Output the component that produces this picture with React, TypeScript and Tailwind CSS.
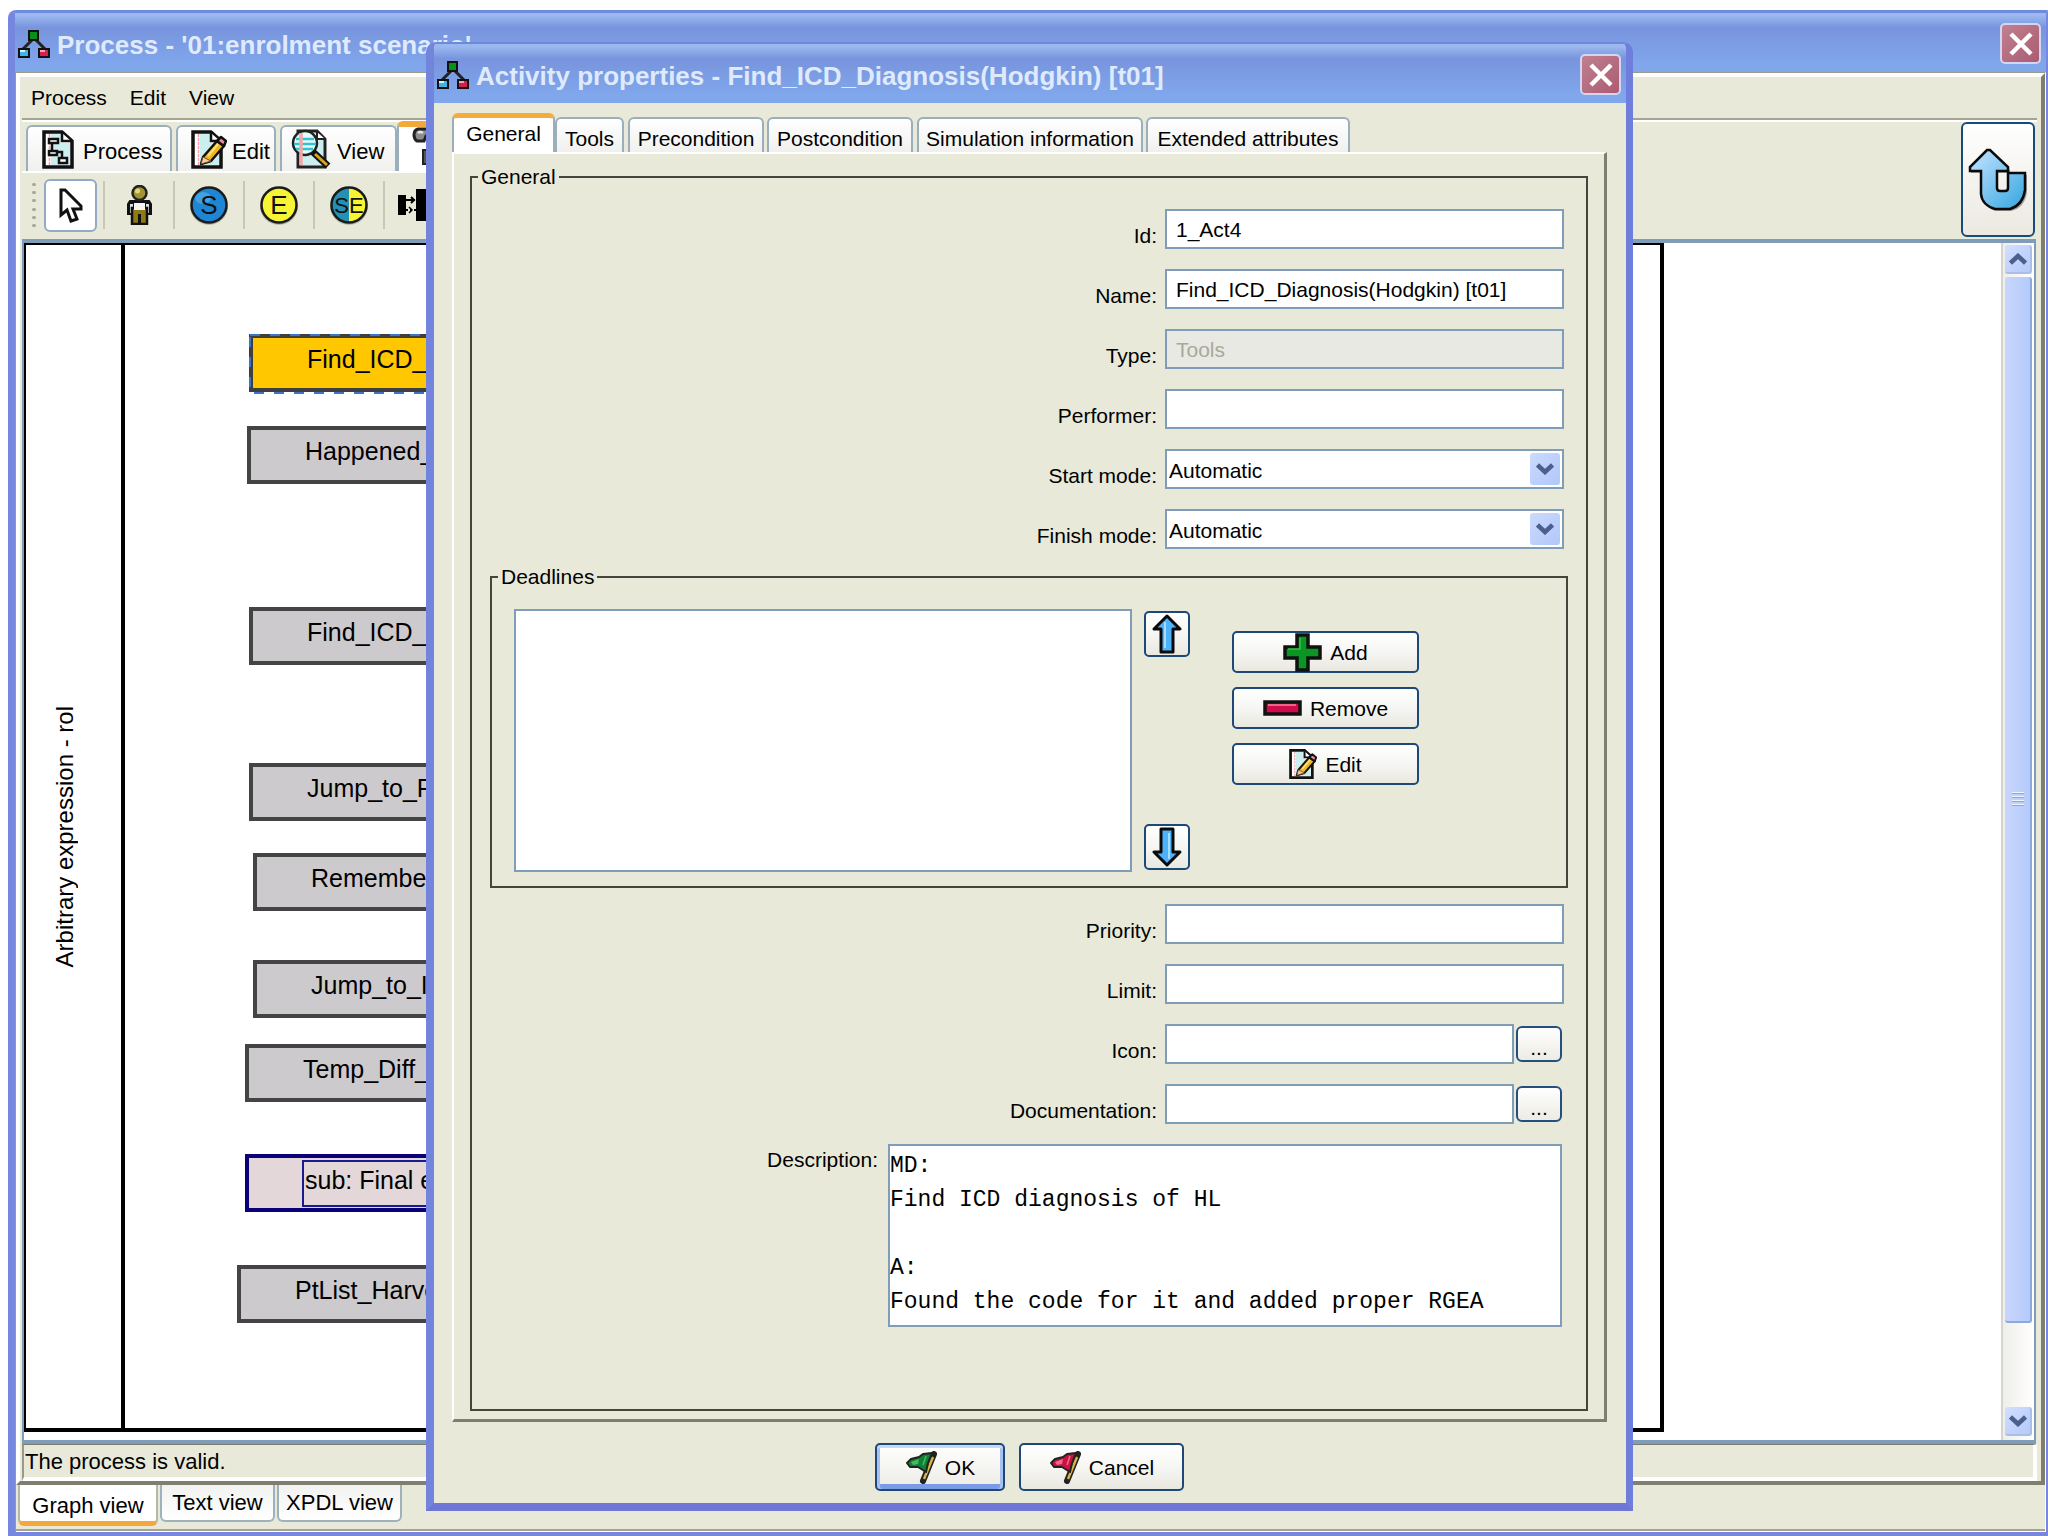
import React from "react";

const SANS = "font-['Liberation_Sans',Arial,sans-serif]";

function TreeIcon() {
  return (
    <svg width="32" height="30" viewBox="0 0 32 30" className="shrink-0">
      <path d="M14 10 L5 19 M18 10 L27 19" stroke="#222" strokeWidth="3" fill="none" />
      <rect x="10" y="0" width="11" height="11" fill="#111" />
      <rect x="12" y="2" width="7" height="7" fill="#0a8f1c" />
      <rect x="0" y="18" width="12" height="10" fill="#111" />
      <rect x="2" y="20" width="8" height="6" fill="#3fb4e8" />
      <rect x="2" y="20" width="5" height="2" fill="#d8f2fb" />
      <rect x="20" y="18" width="12" height="10" fill="#111" />
      <rect x="22" y="20" width="8" height="6" fill="#d81e50" />
      <rect x="22" y="20" width="5" height="2" fill="#f6a0b4" />
    </svg>
  );
}

function CloseButton({ label }: { label: string }) {
  return (
    <button
      aria-label={label}
      className="flex h-[41px] w-[41px] shrink-0 items-center justify-center rounded-[5px] border-2 border-[#d3d6f2] bg-linear-to-br from-[#c0808f] to-[#ab5b73]"
    >
      <svg width="24" height="24" viewBox="0 0 24 24">
        <path d="M2 2 L22 22 M22 2 L2 22" stroke="#fff" strokeWidth="4.5" />
      </svg>
    </button>
  );
}

function TitleBar({ title }: { title: string }) {
  return (
    <header className="flex h-[59px] shrink-0 items-start justify-between bg-linear-to-b from-[#9bb8f0] from-4% via-[#7894dd] via-25% to-[#80a6ec] to-85% pt-[10px] pr-[5px] pl-[3px]">
      <div className="flex items-center gap-[7px] pt-[6px]">
        <TreeIcon />
        <h1 className="text-[26px] leading-8 font-bold whitespace-nowrap text-[#dfeafd]">{title}</h1>
      </div>
      <CloseButton label="Close" />
    </header>
  );
}

function PageSheet() {
  return (
    <>
      <path d="M2 2 H20 L30 11 V37 H2 Z" fill="#fff" stroke="#111" strokeWidth="3.5" />
      <path d="M9 4 H19 V13 H28 V35 H9 Z" fill="#cdeeee" />
      <path d="M7.500 4 V35" stroke="#f0a0a8" strokeWidth="1.500" strokeDasharray="3 1" />
      <path d="M20 3 V11 H29" fill="#fff" stroke="#111" strokeWidth="2.500" />
    </>
  );
}

function ProcessPageIcon() {
  return (
    <svg width="32" height="39" viewBox="0 0 32 39">
      <PageSheet />
      <g fill="#fff" stroke="#111" strokeWidth="2.500">
        <path d="M10 13 V21 M15 22 H20 V28" fill="none" />
        <rect x="7" y="9" width="9" height="4" />
        <rect x="7" y="21" width="8" height="4" />
        <rect x="17" y="28" width="8" height="5" />
      </g>
    </svg>
  );
}

function EditPageIcon({ width, height }: { width: number; height: number }) {
  return (
    <svg width={width} height={height} viewBox="0 0 36 39">
      <PageSheet />
      <path d="M12 27 L26 11 L33 16 L20 31 L10 34 Z" fill="#f2b51d" stroke="#111" strokeWidth="2.500" strokeLinejoin="round" />
      <path d="M12 27 L20 31 L10 34 Z" fill="#f6cfa0" stroke="#7a4a1c" strokeWidth="1" />
      <path d="M26 11 L30 7 L35 11 L33 16 Z" fill="#f08aa4" stroke="#111" strokeWidth="2.500" strokeLinejoin="round" />
      <path d="M17 26 L27 14" stroke="#fbe27c" strokeWidth="2" />
    </svg>
  );
}

function ViewPageIcon() {
  return (
    <svg width="40" height="40" viewBox="0 0 40 40">
      <path d="M7 2 H26 L34 10 V38 H7 Z" fill="#cdeeee" stroke="#222" strokeWidth="3" />
      <path d="M26 3 V10 H34" fill="#fff" stroke="#222" strokeWidth="2" />
      <circle cx="14" cy="14" r="12" fill="#e6fbfb" stroke="#222" strokeWidth="2.500" />
      <path d="M5 10 H23 M3 15 H25 M5 20 H22" stroke="#2fc4d0" strokeWidth="2.500" />
      <path d="M10 4 V36" stroke="#f3a8a8" strokeWidth="3.500" />
      <path d="M22 23 L37 37" stroke="#111" strokeWidth="7" />
      <path d="M24 25 L36 36" stroke="#d9a41e" strokeWidth="3" />
    </svg>
  );
}

function HammerIcon() {
  return (
    <svg width="32" height="42" viewBox="0 0 32 42">
      <path d="M6 2 H28 V9 H14 L12 14 H5 Q2 12 2 8 Q2 3 6 2 Z" fill="#8c8c8c" stroke="#222" strokeWidth="3" />
      <path d="M6 6 Q8 4 11 6" stroke="#e4e4e4" strokeWidth="2.500" fill="none" />
      <rect x="11" y="23" width="10" height="14" fill="#555" stroke="#222" strokeWidth="2" />
    </svg>
  );
}

function PointerIcon() {
  return (
    <svg width="26" height="37" viewBox="0 0 26 37">
      <path d="M3 3 V28 L9 23 L13 34 L19 32 L15 22 H23 V19 L7 3 Z" fill="#fff" stroke="#111" strokeWidth="3" />
    </svg>
  );
}

function PersonIcon() {
  return (
    <svg width="27" height="40" viewBox="0 0 27 40">
      <path d="M4 16 H23 L25 19 V29 H2 V19 Z" fill="#111" stroke="#111" strokeWidth="2" />
      <rect x="4" y="19" width="3" height="9" fill="#ddd" />
      <rect x="20" y="19" width="3" height="9" fill="#ddd" />
      <rect x="6" y="23" width="15" height="16" fill="#8f7a14" stroke="#111" strokeWidth="2.500" />
      <rect x="8" y="18" width="11" height="7" fill="#f4f4f4" />
      <path d="M13.500 29 V39" stroke="#111" strokeWidth="3" />
      <circle cx="13.500" cy="8" r="7" fill="#a39431" stroke="#222" strokeWidth="2.500" />
      <circle cx="11.500" cy="6" r="2.500" fill="#ddd48a" />
    </svg>
  );
}

function LetterDisc({ letters, left, right }: { letters: string; left: string; right: string }) {
  return (
    <svg width="40" height="40" viewBox="0 0 40 40">
      <circle cx="20" cy="21" r="19" fill="#000" opacity="0.2" />
      <path d="M20 2 A18 18 0 0 0 20 38 Z" fill={left} />
      <path d="M20 2 A18 18 0 0 1 20 38 Z" fill={right} />
      {left === right && <circle cx="20" cy="20" r="17" fill={left} />}
      {letters === "S" && <ellipse cx="14" cy="13" rx="8" ry="6" fill="#58b4f0" opacity="0.6" />}
      <circle cx="20" cy="20" r="17.500" fill="none" stroke="#1a1a1a" strokeWidth="2.500" />
      <text
        x="20"
        y={letters.length > 1 ? 28 : 29}
        textAnchor="middle"
        fontFamily="Liberation Sans"
        fontSize={letters.length > 1 ? 22 : 26}
        fill="#111"
      >
        {letters}
      </text>
    </svg>
  );
}

function BlocksIcon() {
  return (
    <svg width="52" height="32" viewBox="0 0 52 32">
      <rect x="0" y="6" width="8" height="20" fill="#000" />
      <path d="M8 11 H17 M13 8 L16 11 L13 14" stroke="#000" strokeWidth="2" fill="none" />
      <path d="M8 21 H18" stroke="#000" strokeWidth="2" strokeDasharray="2 2" />
      <path d="M11 18 L14 21 L11 24" stroke="#000" strokeWidth="1.500" fill="none" />
      <rect x="18" y="0" width="34" height="32" fill="#000" />
    </svg>
  );
}

function UndoIcon() {
  return (
    <svg width="60" height="64" viewBox="0 0 60 64">
      <defs>
        <linearGradient id="undo" x1="0" y1="0" x2="1" y2="1">
          <stop offset="0.2" stopColor="#a9d8fb" />
          <stop offset="1" stopColor="#35a6df" />
        </linearGradient>
      </defs>
      <path
        d="M22 4 L42 22 V25 H30 V41 Q30 44 33 44 H37 Q40 44 40 41 V27 H59 V44 Q57 60 43 63 H28 Q16 60 15 48 V25 H3 V21 L20 4 Z"
        fill="#555"
        opacity="0.5"
      />
      <path
        d="M19 2 H22 L40 19 V23 H29 V40 Q29 43 32 43 H37 Q40 43 40 40 V25 H57 V42 Q55 57 42 61 H27 Q14 57 13 46 V23 H2 V19 Z"
        fill="url(#undo)"
        stroke="#0a0a0a"
        strokeWidth="2.500"
      />
    </svg>
  );
}

function ArrowIcon({ down }: { down?: boolean }) {
  return (
    <svg width="30" height="40" viewBox="0 0 30 40" className={down ? "rotate-180" : ""}>
      <path d="M15 2 L28 15 H21 V38 H9 V15 H2 Z" fill="#4db2fa" stroke="#0a0a0a" strokeWidth="3" strokeLinejoin="round" />
      <path d="M13 8 V34" stroke="#a8dcff" strokeWidth="2" />
    </svg>
  );
}

function PlusIcon() {
  return (
    <svg width="39" height="39" viewBox="0 0 39 39">
      <path d="M14 2 H25 V14 H37 V25 H25 V37 H14 V25 H2 V14 H14 Z" fill="#0b9623" stroke="#111" strokeWidth="3.500" />
      <path d="M17 5 V16 H5" stroke="#2fc247" strokeWidth="1.500" fill="none" />
    </svg>
  );
}

function MinusIcon() {
  return (
    <svg width="39" height="16" viewBox="0 0 39 16">
      <rect x="2" y="2" width="35" height="12" fill="#cf0b4a" stroke="#111" strokeWidth="3.500" />
      <path d="M5 5 H33" stroke="#f286a4" strokeWidth="1.500" />
    </svg>
  );
}

function FlagIcon({ light, dark }: { light: string; dark: string }) {
  return (
    <svg width="34" height="33" viewBox="0 0 34 33">
      <path d="M29 3 L18 30" stroke="#222" strokeWidth="6" strokeLinecap="round" />
      <path d="M28 6 L19 28" stroke="#d9b545" strokeWidth="2.500" />
      <path d="M27 2 L18 3 L14 6 L6 8 L2 12 L5 16 L13 16 L21 21 L23 12 Z" fill={dark} stroke="#222" strokeWidth="2" strokeLinejoin="round" />
      <path d="M14 8 L6 11 L8 14 L13 13 Z" fill={light} />
      <path d="M21 5 L18 14" stroke={light} strokeWidth="1.500" />
    </svg>
  );
}

function Chevron({ up }: { up?: boolean }) {
  return (
    <svg width="18" height="12" viewBox="0 0 18 12" className={up ? "rotate-180" : ""}>
      <path d="M1.500 2 L9 9 L16.500 2" fill="none" stroke="#4a5f8c" strokeWidth="4.500" />
    </svg>
  );
}

const toolbarTabs = [
  { label: "Process", icon: <ProcessPageIcon />, box: "w-[146px] pl-[14px] gap-[9px]" },
  { label: "Edit", icon: <EditPageIcon width={36} height={39} />, box: "w-[100px] pl-[13px] gap-[5px]" },
  { label: "View", icon: <ViewPageIcon />, box: "w-[117px] pl-[9px] gap-[6px]" },
];

const tools = [
  { label: "Participant", icon: <PersonIcon /> },
  { label: "Start", icon: <LetterDisc letters="S" left="#1e86d2" right="#1e86d2" /> },
  { label: "End", icon: <LetterDisc letters="E" left="#f7f433" right="#f7f433" /> },
  { label: "Start and end", icon: <LetterDisc letters="SE" left="#2490b4" right="#f7f433" /> },
];

const nodes = [
  { text: "Find_ICD_", box: "left-[249px] top-[91px] border-[#3f3f3f] bg-[#fec700]", selected: true },
  { text: "Happened_", box: "left-[247px] top-[183px] border-[#444] bg-[#cdcacd]" },
  { text: "Find_ICD_", box: "left-[249px] top-[364px] border-[#444] bg-[#cdcacd]" },
  { text: "Jump_to_F", box: "left-[249px] top-[520px] border-[#444] bg-[#cdcacd]" },
  { text: "Remember", box: "left-[253px] top-[610px] border-[#444] bg-[#cdcacd]" },
  { text: "Jump_to_I", box: "left-[253px] top-[717px] border-[#444] bg-[#cdcacd]" },
  { text: "Temp_Diff_", box: "left-[245px] top-[801px] border-[#444] bg-[#cdcacd]" },
  { text: "sub: Final e", box: "left-[245px] top-[911px] border-[#0a0078] bg-[#e4d7d9]", sub: true },
  { text: "PtList_Harve", box: "left-[237px] top-[1022px] border-[#444] bg-[#cdcacd]" },
];

function Canvas() {
  return (
    <div className="mr-px flex min-h-0 flex-1 border-2 border-t-4 border-b-4 border-[#7f9db9] bg-white">
      <div className="relative flex flex-1 flex-col overflow-hidden">
        <div className="mb-2 flex w-[1640px] flex-1 border-2 border-r-4 border-b-4 border-black">
          <div className="flex w-[99px] items-center justify-center border-r-4 border-black pr-[18px]">
            <span className="rotate-180 text-2xl whitespace-nowrap text-black [writing-mode:vertical-rl]">
              Arbitrary expression - rol
            </span>
          </div>
        </div>
        <div className="absolute top-0 -left-[24px]">
          {nodes.map((n, i) => (
            <div key={i} className={`absolute flex h-[58px] w-[220px] border-4 text-[25px] whitespace-nowrap text-black ${n.box}`}>
              {n.selected && (
                <svg className="absolute -top-1 -left-1" width="220" height="60" viewBox="0 0 220 60">
                  <rect x="1" y="1" width="218" height="58" fill="none" stroke="#3d74c8" strokeWidth="2" strokeDasharray="10 10" />
                </svg>
              )}
              {n.sub ? (
                <span className="mt-[2px] ml-[53px] h-[47px] flex-1 border-2 border-[#1a1a90] pl-px leading-[36px]">{n.text}</span>
              ) : (
                <span className="pl-[54px] leading-[43px]">{n.text}</span>
              )}
            </div>
          ))}
        </div>
      </div>
      <div className="flex w-[33px] shrink-0 flex-col border-l-2 border-[#d5d5d0] bg-linear-to-r from-[#efeeea] to-white px-[2px] pt-[2px]">
        <button
          aria-label="Scroll up"
          className="flex h-[29px] shrink-0 items-center justify-center rounded-[3px] border-r-2 border-b-2 border-[#a9bfe8] bg-linear-to-br from-[#d2dffe] to-[#b5c9fa]"
        >
          <Chevron up />
        </button>
        <div className="mt-[3px] mb-[84px] flex flex-1 flex-col items-center justify-center gap-[2px] rounded-[3px] border-r-2 border-b-2 border-[#8ba9dc] bg-linear-to-r from-[#c7d6fd] to-[#b6cbfb]">
          {[0, 1, 2, 3].map((k) => (
            <span key={k} className="h-[2px] w-3 border-b border-[#8ba6e4] bg-[#eef4fe]" />
          ))}
        </div>
        <button
          aria-label="Scroll down"
          className="mb-1 flex h-[29px] shrink-0 items-center justify-center rounded-[3px] border-r-2 border-b-2 border-[#a9bfe8] bg-linear-to-br from-[#d2dffe] to-[#b5c9fa]"
        >
          <Chevron />
        </button>
      </div>
    </div>
  );
}

function ProcessWindow() {
  return (
    <div className="flex flex-1 flex-col rounded-tl-lg border-2 border-t-[3px] border-b-4 border-l-[7px] border-[#7787df] border-t-[#6f8bdc] bg-[#e9e9d9]">
      <TitleBar title="Process - '01:enrolment scenario'" />
      <div className="flex flex-1 flex-col border-t border-r border-l border-[#9c9b84] border-r-white">
        <div className="flex flex-1 flex-col border-4 border-white border-r-[#7f7e6f] border-b-[#7f7e6f] pr-1 pl-[2px]">
          <nav className="flex h-[41px] shrink-0 items-center gap-[23px] pl-[9px] text-[21px]">
            <button>Process</button>
            <button>Edit</button>
            <button>View</button>
          </nav>
          <div className="h-[4px] shrink-0 border-t-2 border-b-2 border-t-[#a5a490] border-b-white" />
          <div className="flex h-[117px] shrink-0 items-start justify-between pr-[2px]">
            <div className="flex w-1/2 flex-col">
              <div className="flex h-[51px] items-end gap-1 border-b-2 border-white pl-1">
                {toolbarTabs.map((t) => (
                  <button
                    key={t.label}
                    className={`flex h-[46px] items-center rounded-t-md border-2 border-b-0 border-[#9aafbb] bg-linear-to-b from-white to-[#f0f0ee] text-[22px] ${t.box}`}
                  >
                    {t.icon}
                    <span className="pt-[5px]">{t.label}</span>
                  </button>
                ))}
                <button
                  aria-label="Elements"
                  className="-ml-1 flex h-[50px] w-[120px] items-start rounded-t-md border-2 border-t-[6px] border-b-0 border-[#9aafbb] border-t-[#f3a83a] bg-white pl-[13px]"
                >
                  <HammerIcon />
                </button>
              </div>
              <div className="flex h-[64px] items-center pl-[10px]">
                <div className="flex h-[44px] w-[4px] flex-col justify-between">
                  {[0, 1, 2, 3, 4, 5].map((k) => (
                    <span key={k} className="h-[3px] w-[4px] rounded-full bg-[#a9a898]" />
                  ))}
                </div>
                <button
                  aria-label="Select"
                  className="ml-2 flex h-[53px] w-[53px] items-center justify-center rounded-md border-2 border-[#93a9c6] bg-white"
                >
                  <PointerIcon />
                </button>
                <div className="ml-[6px] flex">
                  {tools.map((t) => (
                    <button
                      key={t.label}
                      aria-label={t.label}
                      className="flex h-[48px] w-[70px] items-center justify-center border-l-2 border-[#c9c8b8]"
                    >
                      {t.icon}
                    </button>
                  ))}
                  <button aria-label="Blocks" className="flex h-[48px] items-center border-l-2 border-[#c9c8b8] pl-[13px]">
                    <BlocksIcon />
                  </button>
                </div>
              </div>
            </div>
            <button
              aria-label="Back"
              className="flex h-[115px] w-[74px] items-center justify-center rounded-md border-2 border-[#164c7d] bg-linear-to-b from-white via-[#f4f3ef] to-[#ebe9e0]"
            >
              <UndoIcon />
            </button>
          </div>
          <Canvas />
          <div className="flex h-[37px] shrink-0 items-center border-2 border-t border-r-4 border-b-4 border-l-2 border-white border-t-[#7d7c6c] border-l-[#9a9987] pl-px text-[22px]">
            The process is valid.
          </div>
        </div>
        <div className="flex h-[44px] shrink-0 items-start gap-[2px] pl-[2px] text-[22px]">
          <button className="h-[41px] w-[140px] rounded-b-md border-x-2 border-b-[5px] border-x-[#b9b8a8] border-b-[#f3a83a] bg-white pt-1">
            Graph view
          </button>
          <button className="h-[37px] w-[115px] rounded-b-md border-2 border-t-0 border-[#9db2bd] bg-linear-to-b from-[#f2f2f0] to-white">
            Text view
          </button>
          <button className="h-[37px] w-[125px] rounded-b-md border-2 border-t-0 border-[#9db2bd] bg-linear-to-b from-[#f2f2f0] to-white">
            XPDL view
          </button>
        </div>
        <div className="h-[3px] shrink-0 border-t-2 border-b border-t-[#a5a490] border-b-white" />
      </div>
    </div>
  );
}

const dialogTabs = [
  { label: "Tools", box: "w-[69px]" },
  { label: "Precondition", box: "w-[136px] ml-1" },
  { label: "Postcondition", box: "w-[146px] ml-[3px]" },
  { label: "Simulation information", box: "w-[226px] ml-1" },
  { label: "Extended attributes", box: "w-[204px] ml-[3px]" },
];

const FIELD = "h-10 border-2 border-[#7f9db9] bg-white text-[21px] text-black";

function Row({ id, label, children }: { id: string; label: string; children: React.ReactNode }) {
  return (
    <div className="flex items-end justify-end gap-2 pr-[22px]">
      <label htmlFor={id} className="leading-[26px]">
        {label}
      </label>
      <div className="flex w-[399px] items-center gap-[2px]">{children}</div>
    </div>
  );
}

function TextField({ id, label, value }: { id: string; label: string; value?: string }) {
  return (
    <Row id={id} label={label}>
      <input id={id} defaultValue={value} className={`w-full px-[9px] pt-[2px] ${FIELD}`} />
    </Row>
  );
}

function SelectField({ id, label }: { id: string; label: string }) {
  return (
    <Row id={id} label={label}>
      <div className="relative w-full">
        <select id={id} className={`block w-full appearance-none pt-1 pl-[2px] ${FIELD}`}>
          <option>Automatic</option>
        </select>
        <span className="pointer-events-none absolute top-1 right-1 flex h-8 w-[30px] items-center justify-center rounded-[3px] bg-linear-to-br from-[#ccdafd] to-[#b0c7fa]">
          <Chevron />
        </span>
      </div>
    </Row>
  );
}

function BrowseField({ id, label }: { id: string; label: string }) {
  return (
    <Row id={id} label={label}>
      <input id={id} className={`min-w-0 flex-1 px-[9px] ${FIELD}`} />
      <button
        aria-label={`Browse ${label}`}
        className="mr-[2px] h-9 w-[46px] rounded-md border-2 border-[#24507f] bg-linear-to-b from-white to-[#ecebe4] pt-1"
      >
        ...
      </button>
    </Row>
  );
}

const PUSH = "flex items-center justify-center rounded-[5px] border-2 border-[#1d4878] bg-linear-to-b from-white via-[#f6f6f3] to-[#e9e8e0]";

function ActivityDialog() {
  return (
    <section
      role="dialog"
      aria-label="Activity properties"
      className="absolute top-[42px] right-[415px] bottom-[25px] left-[426px] flex flex-col overflow-hidden rounded-t-[10px] border-2 border-r-[7px] border-b-8 border-l-8 border-[#7384dd] border-t-[#6e88dc] border-r-[#6f7ddb] border-b-[#6f76d6] bg-[#e9e9d9] text-[21px]"
    >
      <TitleBar title="Activity properties - Find_ICD_Diagnosis(Hodgkin) [t01]" />
      <div className="flex flex-1 flex-col pt-[10px] pr-[19px] pb-3 pl-[18px]">
        <div className="flex h-[39px] items-end">
          <button className="h-[39px] w-[103px] rounded-t-md border-2 border-t-[5px] border-b-0 border-[#9aafbb] border-t-[#f5ac3c] bg-white pb-[2px]">
            General
          </button>
          {dialogTabs.map((t) => (
            <button
              key={t.label}
              className={`h-[35px] rounded-t-md border-2 border-b-0 border-[#9aafbb] bg-linear-to-b from-white to-[#f0f0ee] pt-1 whitespace-nowrap ${t.box}`}
            >
              {t.label}
            </button>
          ))}
        </div>
        <div className="flex flex-1 flex-col border-2 border-r-[3px] border-b-[3px] border-white border-r-[#7f7e6f] border-b-[#7f7e6f] px-4 pt-[11px] pb-2">
          <fieldset className="flex flex-1 flex-col border-2 border-[#45453c]">
            <legend className="ml-[6px] px-[3px] leading-6">General</legend>
            <div className="flex flex-col gap-5 pt-5">
              <TextField id="act-id" label="Id:" value="1_Act4" />
              <TextField id="act-name" label="Name:" value="Find_ICD_Diagnosis(Hodgkin) [t01]" />
              <Row id="act-type" label="Type:">
                <input
                  id="act-type"
                  disabled
                  defaultValue="Tools"
                  className="h-10 w-full border-2 border-[#7f9db9] bg-[#e9e9e3] px-[9px] pt-[2px] text-[#a9a89a]"
                />
              </Row>
              <TextField id="act-performer" label="Performer:" />
              <SelectField id="act-start" label="Start mode:" />
              <SelectField id="act-finish" label="Finish mode:" />
            </div>
            <fieldset className="mx-[18px] mt-4 border-2 border-[#45453c]">
              <legend className="ml-[6px] px-[3px] leading-6">Deadlines</legend>
              <div className="flex pt-[20px] pr-[147px] pb-[14px] pl-[22px]">
                <ul aria-label="Deadlines" className="h-[263px] flex-1 border-2 border-[#7f9db9] bg-white" />
                <div className="ml-3 flex flex-col justify-between py-[2px]">
                  <button aria-label="Move up" className={`h-[46px] w-[46px] ${PUSH}`}>
                    <ArrowIcon />
                  </button>
                  <button aria-label="Move down" className={`h-[46px] w-[46px] ${PUSH}`}>
                    <ArrowIcon down />
                  </button>
                </div>
                <div className="ml-[42px] flex flex-col gap-[14px] pt-[22px]">
                  <button className={`h-[42px] w-[187px] gap-2 ${PUSH}`}>
                    <PlusIcon />
                    <span className="pt-[2px]">Add</span>
                  </button>
                  <button className={`h-[42px] w-[187px] gap-2 ${PUSH}`}>
                    <MinusIcon />
                    <span className="pt-[2px]">Remove</span>
                  </button>
                  <button className={`h-[42px] w-[187px] gap-2 ${PUSH}`}>
                    <EditPageIcon width={28} height={32} />
                    <span className="pt-[2px]">Edit</span>
                  </button>
                </div>
              </div>
            </fieldset>
            <div className="mt-4 flex flex-col gap-5">
              <TextField id="act-priority" label="Priority:" />
              <TextField id="act-limit" label="Limit:" />
              <BrowseField id="act-icon" label="Icon:" />
              <BrowseField id="act-doc" label="Documentation:" />
              <div className="flex items-start justify-end gap-[10px] pr-6">
                <label htmlFor="act-desc" className="leading-8">
                  Description:
                </label>
                <textarea
                  id="act-desc"
                  defaultValue={"MD:\nFind ICD diagnosis of HL\n\nA:\nFound the code for it and added proper RGEA"}
                  className="h-[183px] w-[674px] resize-none overflow-hidden border-2 border-[#7f9db9] bg-white pt-[3px] font-['Liberation_Mono','Courier_New',monospace] text-[23px] leading-[34px] text-black"
                />
              </div>
            </div>
          </fieldset>
        </div>
        <div className="flex shrink-0 justify-center gap-[14px] pt-[21px]">
          <button className="flex h-[48px] w-[130px] items-center justify-center gap-[6px] rounded-[5px] border-2 border-[#1d4878] bg-linear-to-b from-white to-[#ecebe4] shadow-[inset_0_3px_0_#c6d8fa,inset_3px_0_0_#a9c1f2,inset_-3px_0_0_#a9c1f2,inset_0_-5px_0_#7b9ce4]">
            <FlagIcon light="#4ab864" dark="#0e8233" />
            <span className="pt-[2px]">OK</span>
          </button>
          <button className={`h-[48px] w-[165px] gap-[6px] ${PUSH}`}>
            <FlagIcon light="#f06a90" dark="#c8123f" />
            <span className="pt-[2px]">Cancel</span>
          </button>
        </div>
      </div>
    </section>
  );
}

export default function App() {
  return (
    <main className={`relative flex min-h-screen flex-col overflow-hidden bg-white pt-[10px] pl-2 text-black ${SANS}`}>
      <ProcessWindow />
      <ActivityDialog />
    </main>
  );
}
